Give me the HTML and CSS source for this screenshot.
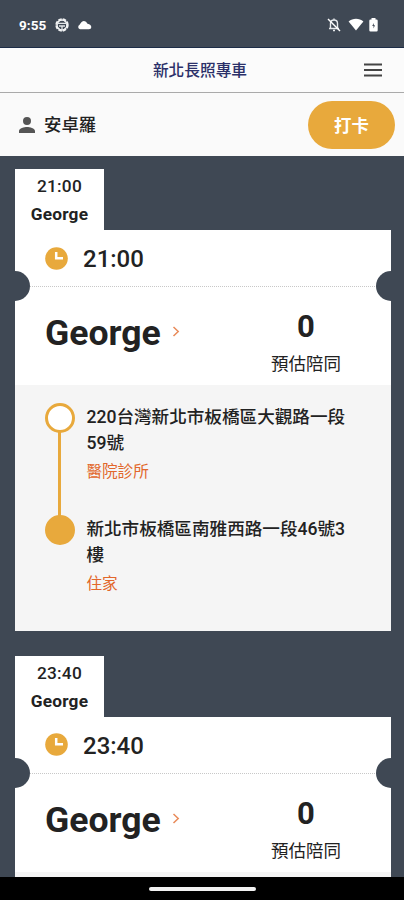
FILE: index.html
```
<!DOCTYPE html>
<html lang="zh-Hant">
<head>
<meta charset="utf-8">
<title>新北長照專車</title>
<link rel="stylesheet" href="styles.css">
</head>
<body>
<div class="phone">
  <div class="status">
    <span class="clock">9:55</span>
    <svg class="s-globe" width="14" height="14" viewBox="0 0 14 14"><circle cx="7" cy="7" r="5.6" fill="none" stroke="#f2f3f4" stroke-width="2.2" stroke-dasharray="3.400 1"/><circle cx="7" cy="7" r="5" fill="none" stroke="#f2f3f4" stroke-width="1.400"/><path d="M2 5.400H12M4 8H10M7 8v3" stroke="#e2e5e8" stroke-width="1.300"/></svg>
    <svg class="s-cloud" width="15" height="10" viewBox="0 0 15 10"><path d="M3 9.300A2.400 2.400 0 0 1 2.600 4.800Q4.500 1 7 1Q9.300 1.200 10.500 3.800Q14.300 4.800 14.300 7.200Q14.200 9.300 12 9.300Z" fill="#fff"/></svg>
    <svg class="s-bell" width="14" height="15" viewBox="0 0 14 15"><path d="M3.500 11V6.500C3.500 4.500 5 3 7 3S10.500 4.500 10.500 6.500V11M2 11.500H12M7 1.500V3M6 13.500H8" fill="none" stroke="#e6e9ec" stroke-width="1.4"/><path d="M1 2L13 14" stroke="#fff" stroke-width="1.4"/></svg>
    <svg class="s-wifi" width="16" height="13" viewBox="0 0 16 13"><path d="M.6 3.600C4.700-.2 11.300-.2 15.400 3.600L8 12.600Z" fill="#fff"/></svg>
    <svg class="s-batt" width="9" height="14" viewBox="0 0 9 14"><path d="M2.500 1.500V0H6.500V1.500H7.500Q8.700 1.500 8.700 2.700V12.300Q8.700 13.600 7.500 13.600H1.500Q.3 13.600 .3 12.300V2.700Q.3 1.500 1.500 1.500Z" fill="#fff"/><path d="M4.800 5L3.200 8H4.500V10.500L6 7.300H4.800Z" fill="#3f4854"/></svg>
  </div>
  <header class="titlebar">
    <h1>新北長照專車</h1>
    <svg class="menu" width="18" height="14" viewBox="0 0 18 14"><path d="M0 1.500H18M0 7H18M0 12.500H18" stroke="#444" stroke-width="1.800"/></svg>
  </header>
  <div class="userbar">
    <svg width="16" height="16" viewBox="4 4 16 16"><path d="M12 12a4 4 0 1 0 0-8 4 4 0 0 0 0 8zm0 2c-2.670 0-8 1.340-8 4v2h16v-2c0-2.660-5.330-4-8-4z" fill="#555"/></svg>
    <span class="user">安卓羅</span>
    <button class="punch">打卡</button>
  </div>
  <main class="list">
    <article class="ticket">
      <div class="tab"><span>21:00</span><b>George</b></div>
      <div class="card">
        <div class="time">
          <svg width="23" height="23" viewBox="0 0 23 23"><circle cx="11.500" cy="11.500" r="11.300" fill="#e8a93c"/><path d="M11.200 5V11.200H18" fill="none" stroke="#fff" stroke-width="2.500"/></svg>
          <span>21:00</span>
        </div>
        <div class="summary">
          <div class="name">George<svg width="8" height="11" viewBox="0 0 8 11"><path d="M1.500 1L6.200 5.500L1.500 10" fill="none" stroke="#e98b5a" stroke-width="1.500"/></svg></div>
          <div class="count"><strong>0</strong><span>預估陪同</span></div>
        </div>
        <div class="route">
          <div class="stop from"><i class="dot"></i><div><p>220台灣新北市板橋區大觀路一段59號</p><em>醫院診所</em></div></div>
          <div class="stop"><i class="dot"></i><div><p>新北市板橋區南雅西路一段46號3樓</p><em>住家</em></div></div>
        </div>
      </div>
    </article>
    <article class="ticket">
      <div class="tab"><span>23:40</span><b>George</b></div>
      <div class="card">
        <div class="time">
          <svg width="23" height="23" viewBox="0 0 23 23"><circle cx="11.500" cy="11.500" r="11.300" fill="#e8a93c"/><path d="M11.200 5V11.200H18" fill="none" stroke="#fff" stroke-width="2.500"/></svg>
          <span>23:40</span>
        </div>
        <div class="summary">
          <div class="name">George<svg width="8" height="11" viewBox="0 0 8 11"><path d="M1.500 1L6.200 5.500L1.500 10" fill="none" stroke="#e98b5a" stroke-width="1.500"/></svg></div>
          <div class="count"><strong>0</strong><span>預估陪同</span></div>
        </div>
        <div class="route"></div>
      </div>
    </article>
  </main>
  <footer class="homebar"><div class="pill"></div></footer>
</div>
</body>
</html>
```
FILE: styles.css
```
* { box-sizing: border-box; margin: 0; padding: 0; }
body {
  font-family: Roboto, "Noto Sans CJK TC", sans-serif;
  color: #222;
  background: #3f4854;
}
.phone {
  width: 404px;
  height: 900px;
  display: flex;
  flex-direction: column;
  overflow: hidden;
}
svg { flex: none; display: block; }
.status {
  flex: none;
  height: 48px;
  padding: 2px 26px 0 19px;
  display: flex;
  align-items: center;
  border-bottom: 1px solid #1c2c47;
  color: #fff;
}
.clock { width: 36px; font: 700 13.5px/16px Roboto, sans-serif; letter-spacing: .1px; }
.s-cloud { margin-left: 8px; }
.s-bell { margin-left: auto; }
.s-wifi { margin-left: 7px; }
.s-batt { margin-left: 5px; }
.titlebar {
  flex: none;
  height: 45px;
  background: #fbfbfb;
  border-bottom: 1px solid #aaa;
  display: grid;
  grid-template-columns: 1fr auto 1fr;
  align-items: center;
  padding: 0 22px 0 18px;
}
.titlebar h1 { grid-column: 2; margin-bottom: 2px; font-size: 15.7px; font-weight: 500; color: #2b3069; }
.menu { justify-self: end; }
.userbar {
  flex: none;
  height: 63px;
  background: #fafafa;
  display: flex;
  align-items: center;
  padding: 0 9px 0 19px;
}
.user { margin-left: 9px; margin-bottom: 2px; font-size: 17.4px; font-weight: 500; }
.punch {
  margin-left: auto;
  width: 87px;
  height: 48px;
  border: 0;
  border-radius: 24px;
  background: #e8a93c;
  color: #fff;
  font: 700 17.4px Roboto, "Noto Sans CJK TC", sans-serif;
}
.list {
  flex: 1;
  min-height: 0;
  overflow: hidden;
  padding: 13px 13px 0 15px;
  display: flex;
  flex-direction: column;
  gap: 24.6px;
}
.ticket { flex: none; }
.tab {
  width: 89px;
  height: 61px;
  background: #fff;
  display: flex;
  flex-direction: column;
  align-items: center;
  padding-top: 3px;
  font-size: 17.3px;
  line-height: 28px;
  font-weight: 500;
  letter-spacing: .2px;
}
.tab b { font-weight: 700; font-size: 17.3px; }
.card { position: relative; background: #fff; }
.card::before, .card::after {
  content: "";
  position: absolute;
  top: 41px;
  width: 15px;
  height: 30px;
  background: #3f4854;
}
.card::before { left: 0; border-radius: 0 15px 15px 0; }
.card::after { right: 0; border-radius: 15px 0 0 15px; }
.time {
  height: 57px;
  padding-left: 30px;
  display: flex;
  align-items: center;
  gap: 15px;
  border-bottom: 1px dotted #c8c8c8;
  font-size: 24px;
  font-weight: 500;
}
.time span { padding-top: 2px; }
.summary {
  height: 98px;
  display: flex;
  justify-content: space-between;
  padding: 20px 50px 0 30px;
}
.name {
  height: 52px;
  display: flex;
  align-items: center;
  gap: 11px;
  font-size: 35.6px;
  font-weight: 700;
}
.name svg { margin-bottom: 3px; }
.count { display: flex; flex-direction: column; align-items: center; }
.count strong { font-size: 31px; line-height: 38px; margin-top: 1px; }
.count span { font-size: 17.5px; line-height: 26px; margin-top: 5px; }
.route {
  height: 246px;
  background: #f5f5f5;
  padding: 18px 37px 0 30px;
}
.stop { display: flex; gap: 11.4px; height: 112px; position: relative; }
.dot {
  flex: none;
  width: 30px;
  height: 30px;
  border: 3px solid #e8a93c;
  border-radius: 50%;
  background: #e8a93c;
}
.from .dot { background: #fff; }
.from::after {
  content: "";
  position: absolute;
  left: 13px;
  top: 29px;
  width: 3px;
  height: 84px;
  background: #e8a93c;
}
.stop p { font-size: 17.6px; line-height: 26px; font-weight: 500; margin-top: 1px; }
.stop em { display: block; font-style: normal; font-size: 15.6px; line-height: 26px; margin-top: 3px; color: #e2672b; }
.homebar {
  flex: none;
  height: 23px;
  background: #000;
  display: flex;
  justify-content: center;
  align-items: center;
}
.pill { width: 107px; height: 4px; border-radius: 2px; background: #f2f2f2; }
```
